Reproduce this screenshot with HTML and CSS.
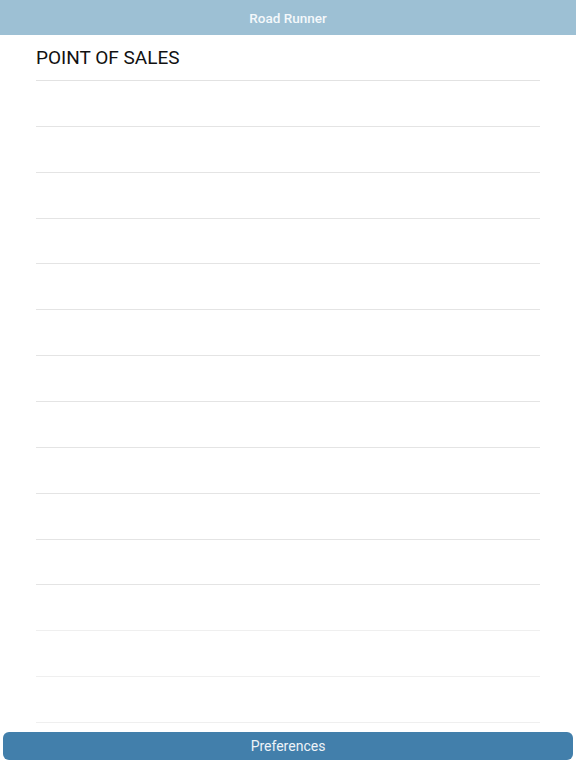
FILE: index.html
```html
<!DOCTYPE html>
<html>
<head>
<meta charset="utf-8">
<link rel="stylesheet" href="styles.css">
</head>
<body>
<div class="app">
  <header class="navbar"><span class="nav-title">Road Runner</span></header>
  <main class="content">
    <h1 class="section-title">POINT OF SALES</h1>
    <ul class="rows">
      <li class="row"></li><li class="row"></li><li class="row"></li><li class="row"></li>
      <li class="row"></li><li class="row"></li><li class="row"></li><li class="row"></li>
      <li class="row"></li><li class="row"></li><li class="row"></li><li class="row"></li>
      <li class="row"></li><li class="row"></li>
    </ul>
  </main>
  <footer class="footer"><button class="pref-btn">Preferences</button></footer>
</div>
</body>
</html>
```
FILE: styles.css
```css
* { box-sizing: border-box; }
html, body { margin: 0; padding: 0; background: #ffffff; }
body { font-family: Roboto, "Noto Sans", Arial, sans-serif; }
.app { width: 576px; height: 768px; display: flex; flex-direction: column; }
.navbar {
  height: 35px;
  background: #9dc0d4;
  display: flex;
  align-items: center;
  justify-content: center;
}
.nav-title { color: #f4f8fb; font-size: 13.5px; font-weight: 500; }
.content { padding: 0 36px; flex: 1; }
.section-title {
  margin: 0;
  height: 46px;
  padding-top: 12px;
  font-size: 19px;
  font-weight: 400;
  color: #111;
  line-height: 22px;
  border-bottom: 1px solid #e2e2e2;
}
.rows { list-style: none; margin: 0; padding: 0; }
.row { height: 45.86px; border-bottom: 1px solid #e4e4e4; }
.row:nth-last-child(-n+3) { border-bottom-color: #efefef; }
.footer { padding: 0 3px 8px; }
.pref-btn {
  width: 100%;
  height: 28px;
  border: none;
  border-radius: 6px;
  background: #427fab;
  color: #eef3f8;
  font-family: Roboto, "Noto Sans", Arial, sans-serif;
  font-size: 14px;
  padding: 0;
}
```
